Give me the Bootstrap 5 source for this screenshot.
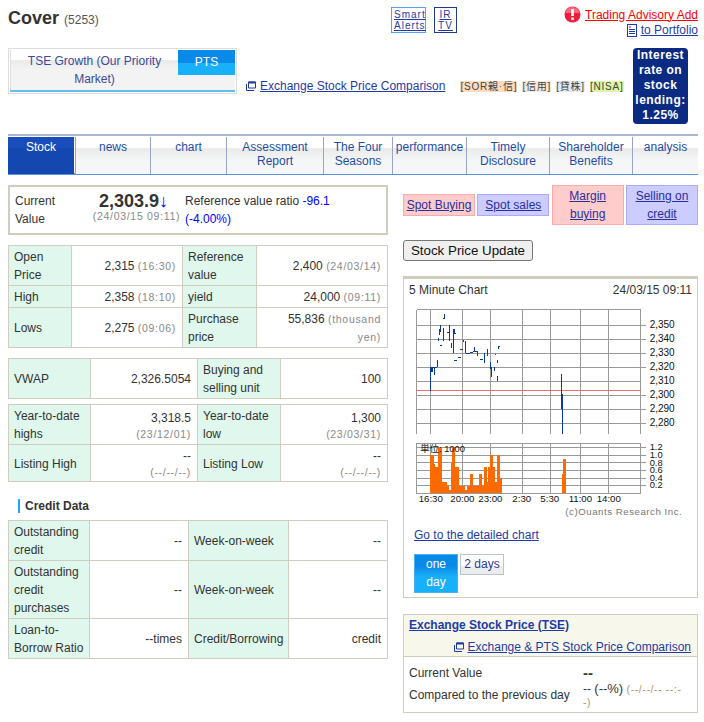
<!DOCTYPE html>
<html lang="en">
<head>
<meta charset="utf-8">
<title>Cover (5253)</title>
<link href="https://cdn.jsdelivr.net/npm/bootstrap@5.3.0/dist/css/bootstrap.min.css" rel="stylesheet">
<style>
body{font-family:"Liberation Sans",Arial,sans-serif;font-size:12px;line-height:18px;color:#333;background:#fff;}
a{color:#1f3ba5;}
.pg{width:690px;margin-left:8px;}
.hdr{height:48px;padding-top:7px;}
.ttl{font-size:18px;font-weight:700;line-height:20px;margin:0;padding-top:1px;width:383px;}
.ttl span{font-size:12px;font-weight:400;color:#555;}
.sq{display:block;font-size:10px;line-height:11px;letter-spacing:1px;text-align:center;padding:1px 2px;border:1px solid #5aa0ee;height:26px;width:35px;white-space:nowrap;}
.sq2{border-color:#1f3b90;width:23px;}
.adv{color:#f00;}
.ic-red{width:17px;height:17px;}
.hdr-r{margin-top:-1px;line-height:16px;}
.pf{margin-top:-1px;}
.rw2{height:86px;}
.mkt{width:229px;height:46px;border:1px solid #ddd;padding:1px;}
.mkt-in{height:42px;border-bottom:2px solid #5fc0f0;background:linear-gradient(#fff 0 10px,#ebebeb 10px 11px,#f3f3f3 20px);}
.mkt-a{flex:1;text-align:center;color:#3a4a9c;border-left:1px solid #ddd;padding:2px 10px 0;}
.mkt-b{width:57px;height:25px;background:linear-gradient(#0a8ae8 0 50%,#18b0fa 50%);color:#fff;text-align:center;line-height:25px;font-size:12px;}
.xlnk{margin-left:9px;margin-top:29px;height:18px;}
.tagz{font-size:10px;line-height:11px;height:11px;letter-spacing:.8px;margin-left:15px;margin-top:33px;gap:5px;color:#444;font-family:"Liberation Sans","Noto Sans CJK JP",sans-serif;}
.t1{background:#fddcc0;}.t2{background:#f5e8dc;}.t3{background:#e2edf5;}.t4{background:#dff5a8;}
.lend{width:55px;height:76px;background:#0b2a82;color:#fff;font-weight:700;font-size:12px;line-height:15px;text-align:center;border-radius:4px;margin-left:auto;margin-right:10px;letter-spacing:.45px;}
.tabs{border-top:2px solid #aab8d0;border-bottom:2px solid #5b8fe0;height:41px;padding-top:1px;flex-wrap:nowrap;}
.tabs .nav-link{height:37px;padding:3px 0 0;text-align:center;color:#1f4da5;font-size:12px;line-height:14px;border-left:1px solid #97a6c6;margin:0;background:linear-gradient(#fff 0 11px,#ebebeb 11px 12px,#f5f6f7 24px);}
.tabs .on{background:linear-gradient(#1a4dbc 0 11px,#1547b0 11px);color:#fff;border-left:0;margin-right:1px;}
.w1{width:67px}.w2{width:75px}.w3{width:76px}.w4{width:97px}.w5{width:69px}.w6{width:74px}.w7{width:83px}.w8{width:83px}.w9{width:66px}
.cols{margin-top:10px;}
.lft{width:380px;}
.rgt{width:295px;margin-left:15px;}
.cur{height:50px;border:2px solid #d0cdc0;padding:5px;}
.cur-l{width:75px;padding-right:15px;}
.cur-m{width:93px;text-align:center;line-height:1;}
.bigp{font-size:18px;font-weight:700;line-height:20px;margin-top:-1px;margin-left:-6px;}
.dn{color:#00f;font-weight:400;}
.sm{font-size:10.5px;letter-spacing:.7px;color:#888;}
.blu{color:#00f;}
.cur-r{padding-left:2px;flex:1;}
.qt{table-layout:fixed;margin:0;border-color:#d0cdc0;width:380px;}
.qt>tbody>tr>*{padding:2px 5px 1px;border:1px solid #d0cdc0;vertical-align:middle;color:#333;font-weight:400;box-shadow:none;}
.qt>tbody>tr>th{background:#dff7ed;}
.qt>tbody>tr>td{text-align:right;padding-right:6px;}
.qt .sm{line-height:15px;}
.tv .sm{display:block;}
.g1{margin-top:10px;}.g2{margin-top:10px;}.g3{margin-top:5px;}
.c1{width:63px}.c2{width:111px}.c3{width:74px}
.c4{width:82px}.c5{width:107px}.c6{width:83px}
.c7{width:81px}.c8{width:99px}.c9{width:100px}
.head2{font-weight:700;margin:17px 0 7px 10px;padding-left:5px;border-left:2px solid #1ea7fd;line-height:14px;height:14px;}
.tradebtns{height:40px;}
.odr{display:flex;align-items:center;justify-content:center;text-align:center;border:1px solid;width:72px;}
.odrr{background:#fcc;border-color:#faa;}
.odrb{background:#ccf;border-color:#aaf;}
.odr a{color:#2a2f9e;}
.sh{height:22px;}
.hh{height:40px;}
.upd{margin:15px 0;display:block;height:21px;width:130px;padding:0;font-size:13.333px;line-height:18px;color:#111;background:#efefef;border:1px solid #767676;border-radius:3px;}
.chartbox{border:1px solid #d0cdc0;border-top:3px solid #d0cdc0;height:322px;padding:0;}
.chartttl{padding:2px 5px 0;height:18px;}
.chartsvg{display:block;margin-top:12px;}
.dtl{display:block;margin:5px 0 0 10px;}
.dys{margin:10px 0 0 10px;gap:2px;}
.d1{display:block;width:44px;height:39px;background:linear-gradient(#0a8ae8 0 30%,#18b0fa 60%);border:1px solid #4ab0f0;color:#fff;text-align:center;text-decoration:none;}
.d2{display:block;width:44px;height:21px;border:1px solid #b8c4d4;text-align:center;color:#1f3ba5;text-decoration:none;background:linear-gradient(#fff 0 60%,#ececec 60%);line-height:18px;}
.tse{margin-top:16px;border:1px solid #d0cdc0;height:99px;}
.tsehd{background:#f7f7ec;border-bottom:1px solid #d0cdc0;height:42px;padding:1px 5px 0;}
.tsehd .a2{text-align:right;padding-right:1px;margin-top:4px;}
.tsebd{padding:7px 5px 0;}
.tl{width:174px;}
.tb{font-weight:700;}
.dash{font-size:15px;font-weight:700;line-height:18px;}
.cmp{line-height:13px;margin-top:0;}
.cmpv{width:100px;word-break:break-all;}
.cmpv b{font-weight:400;font-size:13px;line-height:1;}
.sm2{font-size:10.5px;letter-spacing:.6px;color:#b09070;}
</style>
</head>
<body>
<div class="pg">
  <div class="hdr d-flex">
    <h1 class="ttl">Cover <span>(5253)</span></h1>
    <a class="sq" href="#">Smart<br>Alerts</a>
    <a class="sq sq2 ms-2" href="#">IR<br>TV</a>
    <div class="hdr-r ms-auto text-end">
      <div class="d-flex align-items-center justify-content-end gap-1">
        <svg class="ic-red" viewBox="0 0 17 17"><circle cx="8.500" cy="8.500" r="8" fill="#ee1d3d"/><path d="M1.500 7a7 6 0 0 1 14 0z" fill="#f76a7e"/><rect x="7.200" y="3" width="2.600" height="7" fill="#fff"/><rect x="7.200" y="11.500" width="2.600" height="2.600" fill="#fff"/></svg>
        <a class="adv" href="#">Trading Advisory Add</a>
      </div>
      <div class="pf d-flex align-items-center justify-content-end gap-1">
        <svg width="10" height="13" viewBox="0 0 10 13"><rect x=".5" y=".5" width="9" height="12" fill="#fff" stroke="#1f3ba5"/><path d="M2 3h2M2 5.500h6M2 7.500h6M2 9.500h6" stroke="#1f3ba5"/></svg>
        <a href="#">to Portfolio</a>
      </div>
    </div>
  </div>
  <div class="rw2 d-flex">
    <div class="mkt flex-shrink-0">
      <div class="mkt-in d-flex">
        <div class="mkt-a">TSE Growth (Our Priority Market)</div>
        <div class="mkt-b">PTS</div>
      </div>
    </div>
    <div class="xlnk d-flex align-items-center gap-1 text-nowrap">
      <svg width="10" height="10" viewBox="0 0 10 10"><path d="M.5 3v6.500H8M2.500 1h7v6h-7z" fill="none" stroke="#1f3ba5"/><path d="M2.500 1.500h7" stroke="#1f3ba5" stroke-width="2"/></svg>
      <a href="#">Exchange Stock Price Comparison</a>
    </div>
    <div class="tagz d-flex text-nowrap">
      <span class="t1">[SOR親·信]</span><span class="t2">[信用]</span><span class="t3">[貸株]</span><span class="t4">[NISA]</span>
    </div>
    <div class="lend flex-shrink-0">Interest rate on stock lending: 1.25%</div>
  </div>
  <ul class="nav tabs">
    <li class="w1"><a class="nav-link on" href="#">Stock</a></li>
    <li class="w2"><a class="nav-link" href="#">news</a></li>
    <li class="w3"><a class="nav-link" href="#">chart</a></li>
    <li class="w4"><a class="nav-link" href="#">Assessment Report</a></li>
    <li class="w5"><a class="nav-link" href="#">The Four Seasons</a></li>
    <li class="w6"><a class="nav-link" href="#">performance</a></li>
    <li class="w7"><a class="nav-link" href="#">Timely Disclosure</a></li>
    <li class="w8"><a class="nav-link" href="#">Shareholder Benefits</a></li>
    <li class="w9"><a class="nav-link" href="#">analysis</a></li>
  </ul>
  <div class="cols d-flex align-items-start">
    <div class="lft">
      <div class="cur d-flex">
        <div class="cur-l">Current Value</div>
        <div class="cur-m"><div class="bigp text-nowrap">2,303.9<span class="dn">↓</span></div><div class="sm text-nowrap">(24/03/15 09:11)</div></div>
        <div class="cur-r">Reference value ratio <span class="blu">-96.1</span><br><span class="blu">(-4.00%)</span></div>
      </div>
      <table class="table qt g1">
        <colgroup><col class="c1"><col class="c2"><col class="c3"><col></colgroup>
        <tbody>
          <tr><th>Open Price</th><td>2,315 <span class="sm">(16:30)</span></td><th>Reference value</th><td>2,400 <span class="sm">(24/03/14)</span></td></tr>
          <tr><th>High</th><td>2,358 <span class="sm">(18:10)</span></td><th>yield</th><td>24,000 <span class="sm">(09:11)</span></td></tr>
          <tr><th>Lows</th><td>2,275 <span class="sm">(09:06)</span></td><th>Purchase price</th><td>55,836 <span class="sm">(thousand yen)</span></td></tr>
        </tbody>
      </table>
      <table class="table qt g2">
        <colgroup><col class="c4"><col class="c5"><col class="c6"><col></colgroup>
        <tbody><tr><th>VWAP</th><td>2,326.5054</td><th>Buying and selling unit</th><td>100</td></tr></tbody>
      </table>
      <table class="table qt tv g3">
        <colgroup><col class="c4"><col class="c5"><col class="c6"><col></colgroup>
        <tbody>
          <tr><th>Year-to-date highs</th><td>3,318.5<span class="sm">(23/12/01)</span></td><th>Year-to-date low</th><td>1,300<span class="sm">(23/03/31)</span></td></tr>
          <tr><th>Listing High</th><td>--<span class="sm">(--/--/--)</span></td><th>Listing Low</th><td>--<span class="sm">(--/--/--)</span></td></tr>
        </tbody>
      </table>
      <div class="head2">Credit Data</div>
      <table class="table qt">
        <colgroup><col class="c7"><col class="c8"><col class="c9"><col></colgroup>
        <tbody>
          <tr><th>Outstanding credit</th><td>--</td><th>Week-on-week</th><td>--</td></tr>
          <tr><th>Outstanding credit purchases</th><td>--</td><th>Week-on-week</th><td>--</td></tr>
          <tr><th>Loan-to-Borrow Ratio</th><td>--times</td><th>Credit/Borrowing</th><td>credit</td></tr>
        </tbody>
      </table>
    </div>
    <div class="rgt">
      <div class="tradebtns d-flex justify-content-between align-items-center">
        <div class="odr odrr sh"><a href="#">Spot Buying</a></div>
        <div class="odr odrb sh"><a href="#">Spot sales</a></div>
        <div class="odr odrr hh"><a href="#">Margin buying</a></div>
        <div class="odr odrb hh"><a href="#">Selling on credit</a></div>
      </div>
      <button class="upd" type="button">Stock Price Update</button>
      <div class="chartbox">
        <div class="chartttl d-flex justify-content-between"><span>5 Minute Chart</span><span>24/03/15 09:11</span></div>
        <svg class="chartsvg" width="293" height="212" viewBox="3 30 879 636" font-family="Liberation Sans, Noto Sans CJK JP, sans-serif">
          <g fill="none" stroke="#999" stroke-width="3" shape-rendering="crispEdges">
            <path d="M40.500 31.500H712.500V406M40.500 31.500V406M82.500 31.500V406M178.500 31.500V406M262.500 31.500V406M358.500 31.500V406M442.500 31.500V406M532.500 31.500V406M616.500 31.500V406"/>
            <path d="M40.500 79.500H730M40.500 121.500H730M40.500 163.500H730M40.500 205.500H730M40.500 247.500H712.500M40.500 289.500H730M40.500 331.500H730M40.500 373.500H730"/>
          </g>
          <path d="M40 274.500H713" stroke="#f26a6a" stroke-width="3" shape-rendering="crispEdges"/>
          <g stroke="#0a3a9a" stroke-width="3" shape-rendering="crispEdges" fill="none">
            <path d="M82.500 205V276M86 205V218M89 205V218M94.500 205V228M86 205H103M103.500 183V205M125.500 45V60M121 58H127M112.500 78V100M108.500 90V108M106.500 118V125M121.500 87V125M110 138H116M132 100H137M140.500 78V125M145.500 132V147M152.500 90V163M155 103H158M155.500 90V105M154 185H161M166 174H174M170 150H179M182.500 123V130M188.500 127V163M188 163H200M200 160H210M215.500 145V155M210 156H226M222.500 157V172M230 181H240M243.500 163V193M253.500 150V170M262.500 190V210M265.500 205V233M273.500 205V217M277 165H280M283.500 183V193M283.500 232V245M287.500 141V150M287 141H291"/>
            <path d="M475.500 225V330M478.500 285V406"/>
          </g>
          <g fill="#111" font-size="30">
            <text x="740" y="87">2,350</text><text x="740" y="129">2,340</text><text x="740" y="171">2,330</text><text x="740" y="213">2,320</text><text x="740" y="255">2,310</text><text x="740" y="297">2,300</text><text x="740" y="339">2,290</text><text x="740" y="381">2,280</text>
          </g>
          <g transform="translate(0 390)">
            <g fill="none" stroke="#999" stroke-width="3" shape-rendering="crispEdges">
              <path d="M40.500 193.500V43.500H712.500V193.500M40.500 193.500H712.500"/>
              <path d="M82.500 43.500V193.500M178.500 43.500V193.500M262.500 43.500V193.500M358.500 43.500V193.500M442.500 43.500V193.500M532.500 43.500V193.500M616.500 43.500V193.500"/>
              <path d="M40.500 55.500H730M40.500 78.500H730M40.500 100.500H730M40.500 124.500H730M40.500 147.500H730M40.500 170.500H730"/>
            </g>
            <path fill="#ff6a00" shape-rendering="crispEdges" d="M82 193V78H93V105H97V115H106V55H118V158H132V172H138V183H144V103H148V55H156V115H168V172H186V183H192V172H201V135H210V172H228V135H237V172H243V115H253V158H256V115H262V78H271V115H277V158H282V78H291V148H297V193zM477 193V135H480V90H489V193z"/>
            <g fill="#111" font-size="28">
              <text x="52" y="68">単位: 1000</text>
              <text x="740" y="62">1.2</text><text x="740" y="86">1.0</text><text x="740" y="110">0.8</text><text x="740" y="132">0.6</text><text x="740" y="155">0.4</text><text x="740" y="178">0.2</text>
            </g>
            <g fill="#111" font-size="29">
              <text x="47" y="218">16:30</text><text x="142" y="218">20:00</text><text x="226" y="218">23:00</text><text x="328" y="218">2:30</text><text x="412" y="218">5:30</text><text x="497" y="218">11:00</text><text x="581" y="218">14:00</text>
            </g>
            <text x="487" y="257" fill="#777" font-size="29" letter-spacing="1.600">(c)Ouants Research Inc.</text>
          </g>
        </svg>
        <a class="dtl" href="#">Go to the detailed chart</a>
        <div class="dys d-flex align-items-start">
          <a class="d1" href="#">one day</a>
          <a class="d2" href="#">2 days</a>
        </div>
      </div>
      <div class="tse">
        <div class="tsehd">
          <a class="tb" href="#">Exchange Stock Price (TSE)</a>
          <div class="a2 d-flex align-items-center justify-content-end gap-1">
            <svg width="10" height="10" viewBox="0 0 10 10"><path d="M.5 3v6.500H8M2.500 1h7v6h-7z" fill="none" stroke="#1f3ba5"/><path d="M2.500 1.500h7" stroke="#1f3ba5" stroke-width="2"/></svg>
            <a href="#">Exchange &amp; PTS Stock Price Comparison</a>
          </div>
        </div>
        <div class="tsebd">
          <div class="d-flex"><div class="tl">Current Value</div><div class="dash">--</div></div>
          <div class="cmp d-flex align-items-center"><div class="tl">Compared to the previous day</div><div class="cmpv">-- <b>(--%)</b> <span class="sm2">(--/--/-- --:--)</span></div></div>
        </div>
      </div>
    </div>
  </div>
</div>
<script src="https://cdn.jsdelivr.net/npm/bootstrap@5.3.0/dist/js/bootstrap.bundle.min.js"></script>
</body>
</html>
